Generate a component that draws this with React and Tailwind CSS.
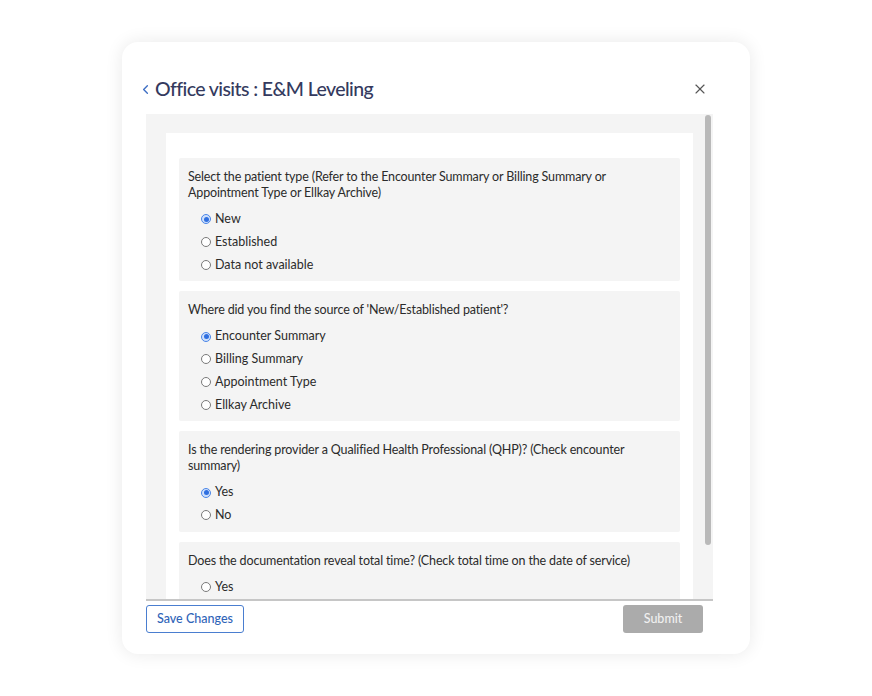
import { ChevronLeft, X } from 'lucide-react';

const questions = [
  {
    q: 'Select the patient type (Refer to the Encounter Summary or Billing Summary or Appointment Type or Ellkay Archive)',
    options: ['New', 'Established', 'Data not available'],
    selected: 0,
  },
  {
    q: "Where did you find the source of 'New/Established patient'?",
    options: ['Encounter Summary', 'Billing Summary', 'Appointment Type', 'Ellkay Archive'],
    selected: 0,
  },
  {
    q: 'Is the rendering provider a Qualified Health Professional (QHP)? (Check encounter summary)',
    options: ['Yes', 'No'],
    selected: 0,
  },
  {
    q: 'Does the documentation reveal total time? (Check total time on the date of service)',
    options: ['Yes', 'No'],
    selected: -1,
  },
];

function Radio({ checked }) {
  if (checked) {
    return (
      <span className="grid h-[10px] w-[10px] place-items-center rounded-full border border-[#4a86e8] bg-[#cfe0fb]">
        <span className="h-[5px] w-[5px] rounded-full bg-[#2f6fe0]" />
      </span>
    );
  }
  return <span className="h-[10px] w-[10px] rounded-full border border-[#7a7a7a] bg-white" />;
}

function Question({ q, options, selected }) {
  return (
    <div className="rounded-[2px] bg-[#f4f4f4] px-[9px] pb-[5px] pt-[11px]">
      <p className="max-w-[465px] text-[12.5px] leading-[16px] tracking-[-0.15px] text-[#2b2b2b]">{q}</p>
      <div className="mt-[7px] pl-[13px]">
        {options.map((o, i) => (
          <label key={o} className="flex h-[22.75px] items-center gap-[4px] text-[12.5px] text-[#2b2b2b]">
            <Radio checked={i === selected} />
            <span>{o}</span>
          </label>
        ))}
      </div>
    </div>
  );
}

export default function App() {
  return (
    <div className="flex min-h-[696px] w-full justify-center bg-white pt-[42px]" style={{ fontFamily: 'Lato, "Open Sans", sans-serif' }}>
      <div className="h-[612px] w-[628px] rounded-[16px] bg-white px-[24px] shadow-[0_0_18px_rgba(0,0,0,0.09)]">
        <div className="flex items-center justify-between pb-[13px] pt-[35px]">
          <div className="-ml-[8px] flex items-center gap-[2px]">
            <ChevronLeft className="h-[15px] w-[15px] text-[#3f6fc4]" strokeWidth={2.2} />
            <h1 className="text-[19.5px] font-medium leading-[24px] tracking-[-0.6px] text-[#343a5e]">Office visits : E&amp;M Leveling</h1>
          </div>
          <X className="mr-[18px] h-[16px] w-[16px] text-[#555]" strokeWidth={1.7} />
        </div>
        <div className="relative h-[485px] w-[567px] overflow-hidden bg-[#f4f4f4] pl-[20px] pr-[20px] pt-[19px]">
          <div className="flex flex-col gap-[10px] bg-white px-[13px] pb-[14px] pt-[25px]">
            {questions.map((x) => (
              <Question key={x.q} {...x} />
            ))}
          </div>
          <div className="absolute right-[2px] top-[1px] h-[430px] w-[6px] rounded-full bg-[#b9b9b9]" />
        </div>
        <div className="h-[2px] w-[567px] bg-[#c6c6c6]" />
        <div className="mt-[4px] flex w-[557px] items-center justify-between">
          <button className="h-[28px] rounded-[3px] border border-[#4a7ed0] bg-white px-[10px] text-[12.5px] font-medium text-[#2f64b8]">
            Save Changes
          </button>
          <button className="h-[28px] w-[80px] rounded-[3px] bg-[#ababab] text-[12.5px] font-medium text-[#f0f0f0]">
            Submit
          </button>
        </div>
      </div>
    </div>
  );
}
